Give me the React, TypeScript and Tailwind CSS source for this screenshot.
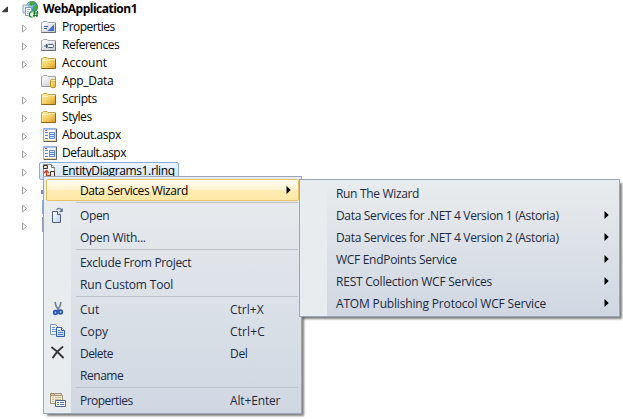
import type { ReactNode } from "react";

type Kind = "props" | "refs" | "folder" | "data" | "page" | "diagram" | "none";

function Defs() {
  return (
    <svg width="0" height="0" className="absolute">
      <defs>
        <linearGradient id="gold" x1="0" y1="0" x2="1" y2="1">
          <stop offset="0" stopColor="#fff0b0" />
          <stop offset=".5" stopColor="#f6d368" />
          <stop offset="1" stopColor="#d79a22" />
        </linearGradient>
        <linearGradient id="silver" x1="0" y1="0" x2="1" y2="1">
          <stop offset="0" stopColor="#ffffff" />
          <stop offset="1" stopColor="#c4c6cc" />
        </linearGradient>
        <linearGradient id="paper" x1="0" y1="0" x2="1" y2="1">
          <stop offset="0" stopColor="#ffffff" />
          <stop offset="1" stopColor="#b9cff5" />
        </linearGradient>
        <radialGradient id="globe" cx=".35" cy=".3" r=".8">
          <stop offset="0" stopColor="#c5ecf9" />
          <stop offset=".5" stopColor="#4aa6d6" />
          <stop offset="1" stopColor="#15568f" />
        </radialGradient>
      </defs>
    </svg>
  );
}

function Folder({ fill, edge, dark }: { fill: string; edge: string; dark: string }) {
  return (
    <>
      <path d="M.5 12.500V2.500h1l1-1H6l1 1h7.500v10z" fill={fill} stroke={edge} />
      <path d="M1.500 4.500H7l1-1h6" fill="none" stroke="#fff" strokeOpacity=".6" />
      <path d="M.5 12.500h14v-9" fill="none" stroke={dark} />
    </>
  );
}

function TreeIcon({ kind }: { kind: Kind }) {
  if (kind === "none") return null;
  if (kind === "page")
    return (
      <svg width="16" height="16" viewBox="0 0 16 16">
        <path d="M2.500 1.500h13v13h-13z" fill="#fffdf0" stroke="#8fb0e6" />
        <path d="M15.500 2v12.500H3" fill="none" stroke="#62615c" />
        <path d="M3 2.500h12" stroke="#a9c6f2" />
        <path d="M3 13.500h12M14.500 3v11" stroke="#f0dc98" />
        <path d="M4 3.500h2" stroke="#d4473a" />
        <path d="M4 5.500h3M4 8.500h3M4 11.500h3" stroke="#5580d6" />
        <path d="M8.500 5.500h5v6h-5z" fill="#dfeafa" stroke="#5c88da" />
        <path d="M8 7.500h6M8 9.500h6" stroke="#5c88da" />
      </svg>
    );
  if (kind === "diagram")
    return (
      <svg width="16" height="16" viewBox="0 0 16 16">
        <path d="M2.500 1.500h8l3 3v10h-11z" fill="#fff" stroke="#8a8886" />
        <path d="M10.500 1.500v3h3" fill="#eee" stroke="#777" />
        <path d="M2.500 2.500h4v3h-4z" fill="#f3dfc9" stroke="#393432" />
        <path d="M9.500 8.500h4v5h-4z" fill="#f4eadd" stroke="#393432" />
        <path d="M5.500 14V8.500M3 10l2.500-2.500L8 10M5 12.500h4" fill="none" stroke="#c53e20" strokeWidth="1.300" />
      </svg>
    );
  return (
    <svg width="16" height="16" viewBox="0 0 16 16">
      <g transform="translate(0 1)">
        {kind === "folder" ? (
          <Folder fill="url(#gold)" edge="#c9a146" dark="#8f6513" />
        ) : (
          <Folder fill="url(#silver)" edge="#a2a4aa" dark={kind === "data" ? "#94969c" : "#6c6f78"} />
        )}
        {kind === "props" && (
          <>
            <path d="M6.500 11 13 4.500V11z" fill="#3f70cf" />
            <path d="M3 6.500h4M3 8.500h3" stroke="#2f5fc0" />
          </>
        )}
        {kind === "refs" && (
          <>
            <rect x="6.500" y="6.500" width="6" height="3" rx="1" fill="#eef2fa" stroke="#4b5a7c" />
            <path d="M3 8h3M5.500 6v4" stroke="#4b5a7c" />
          </>
        )}
        {kind === "data" && (
          <>
            <path d="M9.500 6.500v6c0 1.600 5 1.600 5 0v-6z" fill="url(#gold)" stroke="#c08a1e" />
            <ellipse cx="12" cy="6.500" rx="2.500" ry="1.200" fill="#fff0ac" stroke="#c9972d" strokeWidth=".8" />
          </>
        )}
      </g>
    </svg>
  );
}

function ProjectIcon() {
  return (
    <svg width="17" height="17" viewBox="0 0 17 17">
      <circle cx="10" cy="6" r="5.700" fill="url(#globe)" stroke="#2b7396" strokeWidth=".6" />
      <path d="M8 1c2-1 4-.5 5 .5L12 4 9 5 7 4zM11 6l4-2 .5 3-2 4-2-1z" fill="#43a535" />
      <path d="M1 4h6v8H1z" fill="#dfe8f6" stroke="#93a7cb" />
      <path d="M3.500 6.500h6v8h-6z" fill="#fff" stroke="#7e97c4" />
      <path d="M5 8.500h3M5 10.500h2M5 12.500h2" stroke="#7fa2da" />
      <path d="M6.500 10.500h10v6h-10z" fill="#e7f6e4" />
      <path
        d="M10.500 11H8.500l-1 1v3l1 1h2M12.800 10l-.8 6M15.500 10l-.8 6M11 12h5.500M11 14.500h5"
        fill="none"
        stroke="#138322"
        strokeWidth="1.200"
      />
    </svg>
  );
}

function Expander({ open = false }: { open?: boolean }) {
  return open ? (
    <svg width="7" height="7" viewBox="0 0 7 7">
      <path d="M5.500.8v5H.5z" fill="#404040" stroke="#252525" strokeWidth=".8" />
    </svg>
  ) : (
    <svg width="6" height="9" viewBox="0 0 6 9">
      <path d="M.5 1v7L4.500 4.500z" fill="#fff" stroke="#a0a0a0" />
    </svg>
  );
}

const nodes: { label: string; kind: Kind; leaf?: boolean; track: string }[] = [
  { label: "Properties", kind: "props", track: "tracking-[-0.55px]" },
  { label: "References", kind: "refs", track: "tracking-[-0.5px]" },
  { label: "Account", kind: "folder", track: "tracking-[-0.05px]" },
  { label: "App_Data", kind: "data", leaf: true, track: "tracking-[-0.3px]" },
  { label: "Scripts", kind: "folder", track: "tracking-[-0.4px]" },
  { label: "Styles", kind: "folder", track: "tracking-[-0.45px]" },
  { label: "About.aspx", kind: "page", track: "tracking-[-0.4px]" },
  { label: "Default.aspx", kind: "page", track: "tracking-[-0.5px]" },
  { label: "EntityDiagrams1.rlinq", kind: "diagram", track: "tracking-[-0.38px]" },
  { label: "", kind: "none", track: "" },
  { label: "", kind: "none", track: "" },
  { label: "", kind: "none", track: "" },
];

function Tree() {
  return (
    <div className="flex flex-col text-black">
      <div className="flex h-[18px] items-center">
        <span className="ml-[2px] flex w-[20px] pt-px">
          <Expander open />
        </span>
        <span className="w-[21px]">
          <ProjectIcon />
        </span>
        <span className="font-bold tracking-[-0.5px]">WebApplication1</span>
      </div>
      {nodes.map((n, i) => (
        <div key={i} className="flex h-[18px] items-center pl-[22px]">
          <span className="w-[17px] pt-[2px]">{!n.leaf && <Expander />}</span>
          <div
            className={
              n.kind === "diagram"
                ? "flex h-[18px] w-[140px] items-center rounded-[2px] border border-[#84acdd] bg-linear-to-b from-[#edf4fc] to-[#cfe2fa] pl-px"
                : "flex h-[18px] items-center pl-[2px]"
            }
          >
            <span className="w-[21px]">
              <TreeIcon kind={n.kind} />
            </span>
            <span className={n.track}>{n.label}</span>
          </div>
        </div>
      ))}
    </div>
  );
}

const glyphs: Record<string, ReactNode> = {
  Open: (
    <>
      <path d="M2.500 4.500h5l3 3v8h-8z" fill="url(#paper)" stroke="#52617d" />
      <path d="M7.500 4.500v3h3" fill="#fff" stroke="#52617d" />
      <path d="M6.500 3c1-2 4-2.500 5.500.5" fill="none" stroke="#718099" strokeWidth="1.200" />
      <path d="M12.800 1v4H9z" fill="#5d708f" />
    </>
  ),
  Cut: (
    <>
      <path d="M5 1l1 4 3 5M11 1l-1 4-3 5" fill="none" stroke="#76849a" strokeWidth="1.700" />
      <circle cx="5.500" cy="11.500" r="1.800" fill="#a9c4f5" stroke="#2855b5" strokeWidth="1.700" />
      <circle cx="10.500" cy="11" r="1.800" fill="#a9c4f5" stroke="#2855b5" strokeWidth="1.700" />
    </>
  ),
  Copy: (
    <>
      <path d="M.5 1.500h5l2 2v8h-7z" fill="#f2f6fe" stroke="#7d97cb" />
      <path d="M2 4.500h3M2 6.500h4M2 8.500h4" stroke="#6c92d8" />
      <path d="M6.500 4.500h5l3 3v6h-8z" fill="url(#paper)" stroke="#2e58b4" />
      <path d="M11.500 4.500v3h3" fill="#fff" stroke="#2e58b4" />
      <path d="M8 7.500h2M8 9.500h5M8 11.500h5" stroke="#4a78cf" />
    </>
  ),
  Delete: (
    <path
      d="M2 2.500c3 2 7 5.500 11 10M12.500 2C9 4.500 5.500 8 3 12.500"
      fill="none"
      stroke="#333538"
      strokeWidth="1.900"
      strokeLinecap="round"
    />
  ),
  Properties: (
    <>
      <path d="M.5 1.500h4v2h-4z" fill="#f5c760" stroke="#9b8a68" />
      <path d="M.5 3.500h12v8H.5z" fill="#f6f1df" stroke="#9b9078" />
      <path d="M4.500 1.500h7v2h-7z" fill="#e9e3cf" stroke="#9b9078" />
      <path d="M2 5.500h2M2 7.500h2M2 9.500h2M5 5.500h6M5 7.500h6" stroke="#c7b98d" />
      <path d="M5.500 8.500h10v6h-10z" fill="#fff" stroke="#4d6390" />
      <path d="M7 10.500h2M10 10.500h4M7 12.500h2M10 12.500h4" stroke="#5878b5" />
    </>
  ),
};

type Item = { label: string; track: string; keys?: string; keyTrack?: string; sub?: boolean; hot?: boolean } | null;

const mainItems: Item[] = [
  { label: "Data Services Wizard", sub: true, hot: true, track: "tracking-[-0.44px]" },
  null,
  { label: "Open", track: "tracking-[-0.4px]" },
  { label: "Open With...", track: "tracking-[-0.28px]" },
  null,
  { label: "Exclude From Project", track: "tracking-[-0.34px]" },
  { label: "Run Custom Tool", track: "tracking-[-0.17px]" },
  null,
  { label: "Cut", keys: "Ctrl+X", keyTrack: "tracking-[0px]", track: "tracking-[0px]" },
  { label: "Copy", keys: "Ctrl+C", keyTrack: "tracking-[0.1px]", track: "tracking-[-0.05px]" },
  { label: "Delete", keys: "Del", keyTrack: "tracking-[-0.3px]", track: "tracking-[-0.55px]" },
  { label: "Rename", track: "tracking-[-0.45px]" },
  null,
  { label: "Properties", keys: "Alt+Enter", keyTrack: "tracking-[-0.15px]", track: "tracking-[-0.55px]" },
];

const subItems: Item[] = [
  { label: "Run The Wizard", track: "tracking-[-0.33px]" },
  { label: "Data Services for .NET 4 Version 1 (Astoria)", sub: true, track: "tracking-[-0.34px]" },
  { label: "Data Services for .NET 4 Version 2 (Astoria)", sub: true, track: "tracking-[-0.34px]" },
  { label: "WCF EndPoints Service", sub: true, track: "tracking-[-0.3px]" },
  { label: "REST Collection WCF Services", sub: true, track: "tracking-[-0.22px]" },
  { label: "ATOM Publishing Protocol WCF Service", sub: true, track: "tracking-[-0.17px]" },
];

function Menu({ items, place, icons = false }: { items: Item[]; place: string; icons?: boolean }) {
  return (
    <div
      className={`absolute border border-[#9ba7b7] bg-[linear-gradient(90deg,#e9ecee_27px,transparent_27px),linear-gradient(180deg,#e9ecee,#d0d7e2)] p-[2px] text-[#1b293e] shadow-[3px_3px_2px_-1px_rgba(0,0,0,0.5)] ${place}`}
    >
      {items.map((it, i) =>
        it === null ? (
          <div key={i} className="h-[3px] pt-px pr-px pl-[30px]">
            <div className="h-px bg-[#bec3cb]" />
          </div>
        ) : (
          <div
            key={i}
            className={
              it.hot
                ? "flex h-[22px] items-center rounded-[2px] border border-[#e5c365] bg-[linear-gradient(180deg,#fffcf2_0%,#fff3cf_48%,#ffecb5_50%,#ffe8a6_100%)] pr-[7px] pl-[3px] text-black"
                : "flex h-[22px] items-center pr-[8px] pl-[4px]"
            }
          >
            <span className="w-[30px] shrink-0">
              {icons && glyphs[it.label] && (
                <svg width="18" height="17" viewBox="0 0 18 17">
                  {glyphs[it.label]}
                </svg>
              )}
            </span>
            <span className={`grow pt-[2px] whitespace-pre ${it.track}`}>{it.label}</span>
            {it.keys && <span className={`w-[61px] pt-[2px] ${it.keyTrack}`}>{it.keys}</span>}
            {it.sub && (
              <svg width="5" height="8" viewBox="0 0 5 8">
                <path d="M.5 0v8L4.700 4z" fill="#000" />
              </svg>
            )}
          </div>
        )
      )}
    </div>
  );
}

export default function App() {
  return (
    <div className="relative h-[419px] w-[623px] overflow-hidden bg-white font-['Open_Sans','Noto_Sans',sans-serif] text-[12px] leading-[18px]">
      <Defs />
      <Tree />
      <div className="absolute top-[190px] left-[41px] flex w-[2px] flex-col items-end">
        <span className="h-[4px] w-[2px] bg-[#8d7cc4]" />
        <span className="mt-[6px] h-[14px] w-px bg-[#8fa8dc]" />
        <span className="mt-[3px] h-[15px] w-px bg-[#8f9cbc]" />
      </div>
      <Menu icons items={mainItems} place="left-[43px] top-[176px] h-[238px] w-[259px]" />
      <Menu items={subItems} place="left-[299px] top-[179px] h-[138px] w-[321px]" />
    </div>
  );
}
